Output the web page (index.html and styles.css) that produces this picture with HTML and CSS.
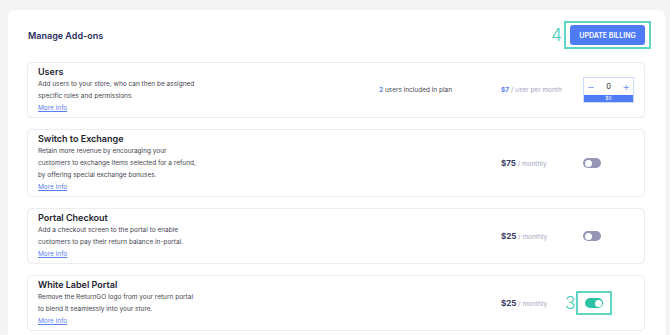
FILE: index.html
```html
<!DOCTYPE html>
<html lang="en">
<head>
    <meta charset="UTF-8">
    <meta name="viewport" content="width=device-width, initial-scale=1.0">
    <title>Manage Add-ons</title>
    <link rel="stylesheet" href="styles.css">
</head>
<body>

    <div class="page">
        <div class="header">
            <h1>Manage Add-ons</h1>
            <div class="billing">
                <span class="marker">4</span>
                <div class="highlight">
                    <button class="billing-btn">Update Billing</button>
                </div>
            </div>
        </div>

        <!-- Add-on list -->
        <ul class="addons">
            <li class="addon">
                <div class="addon-info">
                    <h2>Users</h2>
                    <p>Add users to your store, who can then be assigned<br>specific roles and permissions.</p>
                    <a href="#">More info</a>
                </div>
                <div class="addon-extra"><b>2</b> users included in plan</div>
                <div class="price price-user"><b>$7</b> / user per month</div>
                <div class="addon-control">
                    <div class="stepper">
                        <div class="stepper-row">
                            <span class="step">&minus;</span>
                            <span class="count">0</span>
                            <span class="step">+</span>
                        </div>
                        <div class="stepper-total">$0</div>
                    </div>
                </div>
            </li>
            <li class="addon">
                <div class="addon-info">
                    <h2>Switch to Exchange</h2>
                    <p>Retain more revenue by encouraging your<br>customers to exchange items selected for a refund,<br>by offering special exchange bonuses.</p>
                    <a href="#">More info</a>
                </div>
                <div class="addon-extra"></div>
                <div class="price"><b>$75</b> / monthly</div>
                <div class="addon-control">
                    <span class="toggle"></span>
                </div>
            </li>
            <li class="addon">
                <div class="addon-info">
                    <h2>Portal Checkout</h2>
                    <p>Add a checkout screen to the portal to enable<br>customers to pay their return balance in-portal.</p>
                    <a href="#">More info</a>
                </div>
                <div class="addon-extra"></div>
                <div class="price"><b>$25</b> / monthly</div>
                <div class="addon-control">
                    <span class="toggle"></span>
                </div>
            </li>
            <li class="addon">
                <div class="addon-info">
                    <h2>White Label Portal</h2>
                    <p>Remove the ReturnGO logo from your return portal<br>to blend it seamlessly into your store.</p>
                    <a href="#">More info</a>
                </div>
                <div class="addon-extra"></div>
                <div class="price"><b>$25</b> / monthly</div>
                <div class="addon-control">
                    <span class="marker marker-small">3</span>
                    <div class="highlight highlight-toggle">
                        <span class="toggle on"></span>
                    </div>
                </div>
            </li>
        </ul>
    </div>

</body>
</html>
```

FILE: styles.css
```css
body {
    font-family: Inter, "Noto Sans", sans-serif;
    margin: 0;
    padding: 10px 5px 0 8px;
    background-color: #f4f4f5;
    color: #3a3a48;
    height: 325px;
    overflow: hidden;
}
.page {
    background-color: #fff;
    border-radius: 6px 6px 0 0;
    padding: 11px 20px 20px 19px;
    min-height: 320px;
}
.header {
    display: flex;
    justify-content: space-between;
    align-items: center;
    margin-bottom: 13px;
}
h1 {
    font-size: 9px;
    font-weight: 600;
    color: #2a2c60;
    margin: 0 0 0 1px;
}
.billing {
    display: flex;
    align-items: center;
    gap: 2px;
    margin-right: -6px;
}
.marker {
    font-size: 17px;
    font-weight: 300;
    color: #3fcbb5;
    line-height: 1;
}
.highlight {
    border: 2px solid #5fd6c3;
    padding: 2px 4px;
}
.billing-btn {
    display: block;
    background-color: #4f7bf6;
    color: #fff;
    border: none;
    border-radius: 3px;
    font-family: inherit;
    font-size: 7px;
    font-weight: 600;
    text-transform: uppercase;
    height: 20px;
    width: 75px;
    padding: 0;
    cursor: pointer;
}
.addons {
    list-style-type: none;
    margin: 0;
    padding: 0;
    display: flex;
    flex-direction: column;
    gap: 11px;
}
.addon {
    display: grid;
    grid-template-columns: 1fr 122px 82px 51px;
    align-items: center;
    border: 1px solid #ececf1;
    border-radius: 4px;
    padding: 3px 10px 3px 10px;
}
.addon-info {
    font-size: 6.5px;
    line-height: 12px;
}
.addon-info h2 {
    font-size: 9px;
    line-height: 12px;
    font-weight: 600;
    color: #22232e;
    margin: 0;
}
.addon-info p {
    margin: 0;
    color: #45454f;
}
.addon-info a {
    display: inline-block;
    color: #5b82f3;
}
.addon-extra {
    font-size: 6.5px;
    color: #45454f;
}
.addon-extra b {
    color: #4f7bf6;
    font-weight: 600;
}
.price {
    font-size: 6.5px;
    color: #a3a5c0;
}
.price b {
    font-size: 8px;
    font-weight: 700;
    color: #383a66;
}
.price-user b {
    font-size: 6.5px;
    color: #4f7bf6;
}
.addon-control {
    position: relative;
    display: flex;
    align-items: center;
}
.stepper {
    width: 51px;
    border: 1px solid #cfdbfd;
    box-sizing: border-box;
}
.stepper-row {
    display: flex;
    justify-content: space-between;
    align-items: center;
    height: 17px;
    padding: 0 3px;
}
.step {
    color: #6b8ff7;
    font-size: 12px;
    font-weight: 300;
}
.count {
    font-size: 7.5px;
    color: #222;
}
.stepper-total {
    background-color: #4f7bf6;
    color: #fff;
    font-size: 5px;
    text-align: center;
    height: 7px;
    line-height: 7px;
}
.toggle {
    display: block;
    width: 18px;
    height: 10px;
    border-radius: 5px;
    background-color: #9596b6;
    position: relative;
}
.toggle::after {
    content: "";
    position: absolute;
    top: 1.5px;
    left: 1.5px;
    width: 7px;
    height: 7px;
    border-radius: 50%;
    background-color: #fff;
}
.toggle.on {
    background-color: #2ec2a5;
}
.toggle.on::after {
    left: 9.5px;
}
.marker-small {
    position: absolute;
    left: -18px;
    top: 50%;
    transform: translateY(-50%);
}
.highlight-toggle {
    margin-left: -7px;
    padding: 5px 7px;
}
```
